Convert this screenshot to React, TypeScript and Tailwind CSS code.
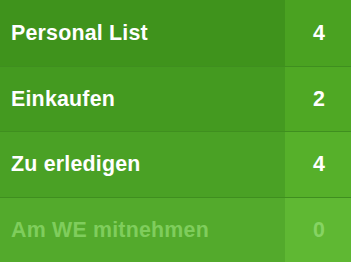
const lists = [
  { name: 'Personal List', count: 4, left: 'bg-[#3f931c]', right: 'bg-[#4aa221]', dim: false },
  { name: 'Einkaufen', count: 2, left: 'bg-[#449a20]', right: 'bg-[#4fa824]', dim: false },
  { name: 'Zu erledigen', count: 4, left: 'bg-[#4aa125]', right: 'bg-[#56b02a]', dim: false },
  { name: 'Am WE mitnehmen', count: 0, left: 'bg-[#53aa2c]', right: 'bg-[#5fb833]', dim: true },
]

export default function App() {
  return (
    <div className="w-[351px] h-[262px] flex flex-col overflow-hidden bg-[#3d8d1c] font-['Liberation_Sans',Arial,sans-serif] font-bold">
      {lists.map((list, i) => (
        <div
          key={list.name}
          className={`flex h-[65.5px] ${i > 0 ? 'border-t border-[#3f8f1f]' : ''}`}
        >
          <div className={`flex-1 flex items-center pl-[11px] text-[21.4px] tracking-[0.2px] ${list.left} ${list.dim ? 'text-[#7fcd5c]' : 'text-white'}`}>
            {list.name}
          </div>
          <div className={`w-[66px] flex items-center justify-center pl-[2px] text-[21.4px] ${list.right} ${list.dim ? 'text-[#86d363]' : 'text-white'}`}>
            {list.count}
          </div>
        </div>
      ))}
    </div>
  )
}
